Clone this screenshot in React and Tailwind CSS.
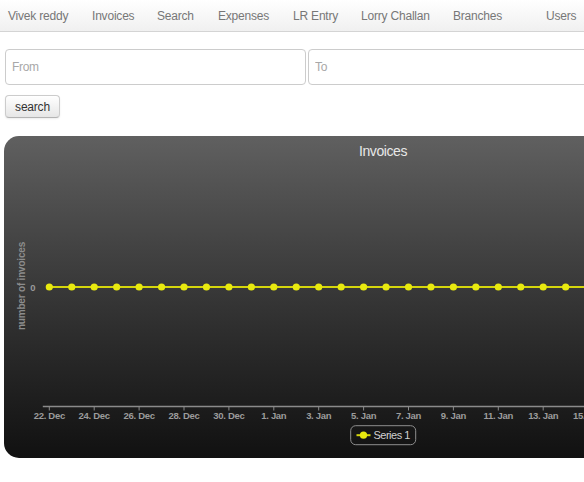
import React from "react";

const navItems = [
  { label: "Vivek reddy", w: "w-[84px]" },
  { label: "Invoices", w: "w-[65px]" },
  { label: "Search", w: "w-[61px]" },
  { label: "Expenses", w: "w-[75px]" },
  { label: "LR Entry", w: "w-[68px]" },
  { label: "Lorry Challan", w: "w-[92px]" },
  { label: "Branches", w: "w-[93px]" },
  { label: "Users", w: "w-[60px]" },
];

const dateLabels = [
  "22. Dec", "24. Dec", "26. Dec", "28. Dec", "30. Dec", "1. Jan", "3. Jan",
  "5. Jan", "7. Jan", "9. Jan", "11. Jan", "13. Jan", "15. Jan",
];

const STEP = 22.45;
const FIRST_X = 45.3;
const ZERO_Y = 151;

const InvoicesChart = () => {
  const points = Array.from({ length: 26 }, (_, i) => FIRST_X + i * STEP);

  return (
    <div className="mt-[18px] ml-1 w-[758px] h-[322px] rounded-[15px] bg-linear-to-b from-[#606060] to-[#111111]">
      <svg width="758" height="322" className="block" style={{ fontFamily: '"Liberation Sans", Arial, sans-serif' }}>
        {/* title */}
        <text x="379" y="20" textAnchor="middle" fontSize="14" fill="#e8e8e8" letterSpacing="-0.4">
          Invoices
        </text>

        {/* y axis */}
        <text
          x="0"
          y="0"
          transform="translate(21 150) rotate(-90)"
          textAnchor="middle"
          fontSize="10"
          fontWeight="bold"
          fill="#8c8c8c"
          letterSpacing="-0.2"
        >
          number of invoices
        </text>
        <text x="31.5" y="154.5" textAnchor="end" fontSize="9.5" fontWeight="bold" fill="#9a9a9a">
          0
        </text>

        {/* x axis */}
        <line x1="38.8" y1="270.5" x2="758" y2="270.5" stroke="#8a8a8a" strokeWidth="1.5" />
        {dateLabels.map((d, i) => {
          const x = FIRST_X + i * 2 * STEP;
          return (
            <g key={d}>
              <line x1={x} y1="270" x2={x} y2="274.5" stroke="#8a8a8a" strokeWidth="1" />
              <text x={x} y="282.5" textAnchor="middle" fontSize="9.5" fontWeight="bold" fill="#9c9c9c" letterSpacing="-0.3">
                {d}
              </text>
            </g>
          );
        })}

        {/* series */}
        <line x1={FIRST_X} y1={ZERO_Y} x2="758" y2={ZERO_Y} stroke="#d5d60c" strokeWidth="2" />
        {points.map((x) => (
          <circle key={x} cx={x} cy={ZERO_Y} r="3.6" fill="#e8e90f" />
        ))}

        {/* legend */}
        <rect x="346.7" y="289.7" width="65" height="19" rx="5" fill="none" stroke="#8e8e8e" strokeWidth="1" />
        <line x1="352.5" y1="299.2" x2="366.5" y2="299.2" stroke="#d5d60c" strokeWidth="2" />
        <circle cx="359.5" cy="299.2" r="3.6" fill="#e8e90f" />
        <text x="369.5" y="303.3" fontSize="11" fill="#d0d0d0" letterSpacing="-0.5">
          Series 1
        </text>
      </svg>
    </div>
  );
};

export default function App() {
  return (
    <div className="w-full overflow-hidden bg-white font-['Liberation_Sans',Arial,sans-serif]">
      {/* top navbar */}
      <div className="h-[32px] w-[760px] bg-linear-to-b from-white to-[#f0f0f0] border-b border-[#d4d4d4]">
        <ul className="flex h-full items-center pl-2">
          {navItems.map((item) => (
            <li key={item.label} className={`${item.w} shrink-0 text-[12px] tracking-[-0.2px] text-[#777777]`}>
              {item.label}
            </li>
          ))}
        </ul>
      </div>

      {/* date filter */}
      <div className="mt-[17px] flex gap-[2px] pl-[5px] w-[760px]">
        <input
          placeholder="From"
          className="w-[301px] h-[36px] shrink-0 rounded-[4px] border border-[#cccccc] px-[6px] text-[12px] tracking-[-0.3px] placeholder:text-[#a8a8a8] outline-none"
        />
        <input
          placeholder="To"
          className="w-[301px] h-[36px] shrink-0 rounded-[4px] border border-[#cccccc] px-[6px] text-[12px] tracking-[-0.3px] placeholder:text-[#a8a8a8] outline-none"
        />
      </div>

      <div className="mt-[10px] flex pl-[5px]">
        <button className="w-[55px] h-[23px] rounded-[4px] border border-[#cccccc] border-b-[#b3b3b3] bg-linear-to-b from-white to-[#e6e6e6] text-[12px] tracking-[-0.2px] text-[#333333] shadow-[0_1px_2px_rgba(0,0,0,0.08)]">
          search
        </button>
      </div>

      <InvoicesChart />
      <div className="h-[24px]" />
    </div>
  );
}
